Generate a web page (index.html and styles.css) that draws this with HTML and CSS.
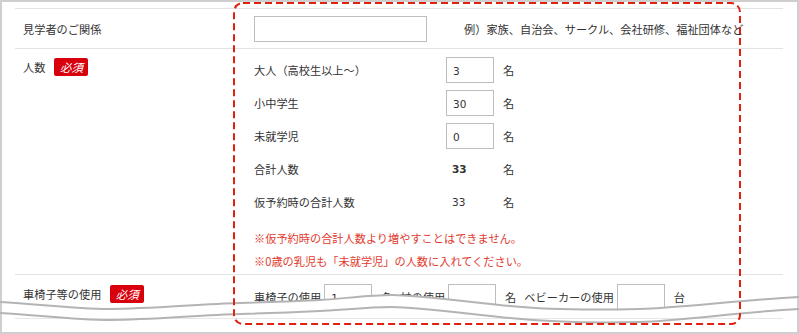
FILE: index.html
```html
<!DOCTYPE html>
<html lang="ja">
<head>
<meta charset="utf-8">
<title>見学者情報</title>
<link rel="stylesheet" href="styles.css">
</head>
<body>
<div class="stage">
  <div class="frame">
    <div class="table">
      <div class="row r1">
        <div class="th">見学者のご関係</div>
        <div class="td inline">
          <input class="field wide" type="text" value="">
          <span class="example">例）家族、自治会、サークル、会社研修、福祉団体など</span>
        </div>
      </div>
      <div class="row r2">
        <div class="th">人数<span class="badge">必須</span></div>
        <div class="td">
          <div class="sub"><span class="sublabel">大人（高校生以上〜）</span><input class="field num" type="text" value="3"><span class="unit">名</span></div>
          <div class="sub"><span class="sublabel">小中学生</span><input class="field num" type="text" value="30"><span class="unit">名</span></div>
          <div class="sub"><span class="sublabel">未就学児</span><input class="field num" type="text" value="0"><span class="unit">名</span></div>
          <div class="sub"><span class="sublabel">合計人数</span><span class="total bold">33</span><span class="unit">名</span></div>
          <div class="sub"><span class="sublabel">仮予約時の合計人数</span><span class="total">33</span><span class="unit">名</span></div>
          <div class="notes">
            <p class="note">※仮予約時の合計人数より増やすことはできません。</p>
            <p class="note">※0歳の乳児も「未就学児」の人数に入れてください。</p>
          </div>
        </div>
      </div>
      <div class="row r3">
        <div class="th">車椅子等の使用<span class="badge">必須</span></div>
        <div class="td inline">
          <span class="ilabel">車椅子の使用</span><input class="field num" type="text" value="1"><span class="unit">名</span>
          <span class="ilabel">杖の使用</span><input class="field num" type="text" value=""><span class="unit">名</span>
          <span class="ilabel">ベビーカーの使用</span><input class="field num" type="text" value=""><span class="unit">台</span>
        </div>
      </div>
    </div>
  </div>
  <svg class="overlay" width="799" height="334" viewBox="0 0 799 334">
    <path d="M2,302 C40,304 70,309 110,309 S200,304 240,303 S300,301 320,300 S370,295 392,295 S470,302 510,306 S600,310 640,309 S740,300 797,297 L797,332 L2,332 Z" fill="#ffffff"/>
    <line x1="15" y1="318.5" x2="783" y2="318.5" stroke="#e8e8e8" stroke-width="1"/>
    <path d="M0,302 C40,304 70,309 110,309 S200,304 240,303 S300,301 320,300 S370,295 392,295 S470,302 510,306 S600,310 640,309 S740,300 799,297" fill="none" stroke="#b4b4b4" stroke-width="2"/>
    <path d="M0,313 C40,315 70,320 110,320 S200,315 240,314 S300,312 320,311 S370,307 392,307 S470,314 510,318 S600,323 640,322 S740,312 799,309" fill="none" stroke="#b4b4b4" stroke-width="2"/>
    <rect x="234" y="3" width="506" height="321" rx="9" ry="9" fill="none" stroke="#e2200f" stroke-width="2" stroke-dasharray="7 4"/>
  </svg>
</div>
</body>
</html>
```
FILE: styles.css
```css
html, body {
  margin: 0;
  padding: 0;
  background: #ffffff;
}

body {
  font-family: "Noto Sans CJK JP", "Noto Sans", sans-serif;
  font-size: 11.2px;
  color: #333333;
}

.stage {
  position: relative;
  width: 799px;
  height: 334px;
  overflow: hidden;
}

.frame {
  box-sizing: border-box;
  width: 799px;
  height: 334px;
  border: 2px solid #cfcfcf;
  background: #ffffff;
  overflow: hidden;
}

.table {
  margin: 6px 0 0 13px;
  width: 768px;
}

.row {
  display: flex;
  border-top: 1px solid #e3e3e3;
}

.th {
  box-sizing: border-box;
  width: 239px;
  flex: none;
  padding-left: 8px;
  line-height: 18px;
  display: flex;
  align-items: flex-start;
}

.td {
  flex: 1;
  min-width: 0;
}

.inline {
  display: flex;
  align-items: center;
  white-space: nowrap;
}

.r1 {
  height: 39px;
  align-items: center;
}

.r1 .th {
  align-items: center;
}

.r2 .th {
  padding-top: 9px;
}

.r2 .td {
  padding-top: 8px;
  padding-bottom: 1px;
}

.r3 .th {
  padding-top: 10px;
}

.r3 .td {
  padding-top: 9px;
  align-items: flex-start;
}

.badge {
  display: inline-block;
  margin-left: 9px;
  width: 34px;
  height: 18px;
  line-height: 18px;
  text-align: center;
  background: #d8000c;
  color: #ffffff;
  font-style: italic;
  font-size: 11.5px;
  border-radius: 2px;
}

.field {
  box-sizing: border-box;
  height: 26px;
  margin: 0;
  border: 1px solid #bdbdbd;
  background: #ffffff;
  padding: 1px 6px 0 6px;
  font-family: "DejaVu Sans", "Noto Sans", sans-serif;
  font-size: 10.5px;
  color: #333333;
  outline: none;
}

.wide {
  width: 173px;
}

.num {
  width: 48px;
}

.example {
  margin-left: 37px;
}

.sub {
  display: flex;
  align-items: center;
  height: 26px;
  margin-bottom: 7px;
}

.sub:last-of-type {
  margin-bottom: 0;
}

.sublabel {
  width: 192px;
  flex: none;
}

.total {
  box-sizing: border-box;
  width: 48px;
  padding-left: 6px;
  font-family: "DejaVu Sans", "Noto Sans", sans-serif;
  font-size: 10.5px;
}

.bold {
  font-weight: bold;
}

.unit {
  margin-left: 9px;
  line-height: 26px;
}

.ilabel {
  margin-right: 3px;
  line-height: 26px;
}

.unit + .ilabel {
  margin-left: 8px;
}

.notes {
  margin-top: 12px;
}

.note {
  margin: 0;
  line-height: 23px;
  color: #e23a2e;
}

.overlay {
  position: absolute;
  left: 0;
  top: 0;
  pointer-events: none;
}
```
